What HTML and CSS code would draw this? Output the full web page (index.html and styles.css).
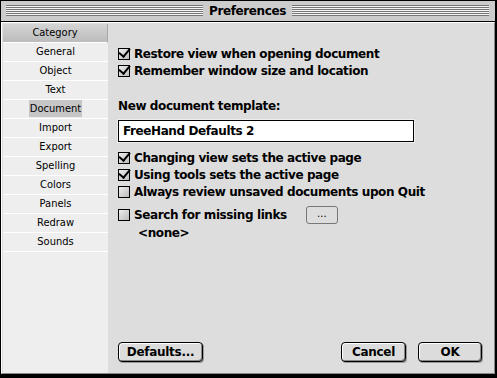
FILE: index.html
```html
<!DOCTYPE html>
<html lang="en">
<head>
  <meta charset="UTF-8" />
  <title>Preferences</title>
  <link rel="stylesheet" href="styles.css">
</head>
<body>
  <div class="window">
    <div class="titlebar">
      <div class="stripes"></div>
      <div class="title">Preferences</div>
      <div class="stripes"></div>
    </div>

    <div class="content">
      <div class="category-list">
        <div class="category-head">Category</div>
        <div class="cat-item">General</div>
        <div class="cat-item">Object</div>
        <div class="cat-item">Text</div>
        <div class="cat-item"><span class="selected">Document</span></div>
        <div class="cat-item">Import</div>
        <div class="cat-item">Export</div>
        <div class="cat-item">Spelling</div>
        <div class="cat-item">Colors</div>
        <div class="cat-item">Panels</div>
        <div class="cat-item">Redraw</div>
        <div class="cat-item">Sounds</div>
      </div>

      <div class="panel">
        <div class="group first">
          <label class="check"><span class="box checked"></span>Restore view when opening document</label>
          <label class="check"><span class="box checked"></span>Remember window size and location</label>
        </div>

        <div class="field-label">New document template:</div>
        <div class="text-field">FreeHand Defaults 2</div>

        <div class="group">
          <label class="check"><span class="box checked"></span>Changing view sets the active page</label>
          <label class="check"><span class="box checked"></span>Using tools sets the active page</label>
          <label class="check"><span class="box"></span>Always review unsaved documents upon Quit</label>
          <div class="links-row">
            <label class="check"><span class="box"></span>Search for missing links</label>
            <span class="small-btn">...</span>
          </div>
          <div class="none-label">&lt;none&gt;</div>
        </div>

        <div class="buttons">
          <button class="btn defaults">Defaults...</button>
          <div class="spacer"></div>
          <button class="btn cancel">Cancel</button>
          <button class="btn ok">OK</button>
        </div>
      </div>
    </div>
  </div>
</body>
</html>
```

FILE: styles.css
```css
* {
  box-sizing: border-box;
}

body {
  margin: 0;
  background: #000;
  font-family: 'DejaVu Sans Condensed', 'DejaVu Sans', sans-serif;
  color: #000;
}

.window {
  width: 497px;
  height: 378px;
  background: #000;
  padding: 1px 2px 4px 1px;
  display: flex;
  flex-direction: column;
}

.titlebar {
  height: 21px;
  background: #cccccc;
  display: flex;
  align-items: center;
  padding: 0 6px 1px 5px;
  gap: 4px;
  border-bottom: 1px solid #000;
  flex-shrink: 0;
}

.stripes {
  flex: 1;
  height: 11px;
  background: repeating-linear-gradient(to bottom, #777 0, #777 1px, #f4f4f4 1px, #f4f4f4 2px);
}

.title {
  font-family: 'DejaVu Sans', sans-serif;
  font-weight: bold;
  font-size: 12px;
  padding: 0 2px;
  letter-spacing: -0.4px;
}

.content {
  flex: 1;
  display: flex;
  background: #dddddd;
  border-top: 1px solid #fff;
  border-left: 1px solid #fff;
  border-right: 1px solid #888;
  border-bottom: 1px solid #888;
}

.category-list {
  width: 105px;
  background: #eeeeee;
  margin: 1px 0 0 1px;
  font-size: 11px;
}

.category-head {
  height: 19px;
  line-height: 18px;
  text-align: center;
  background: linear-gradient(#d4d4d4, #bcbcbc);
  border-bottom: 1px solid #fff;
  border-right: 1px solid #aaa;
}

.cat-item {
  height: 19px;
  line-height: 18px;
  text-align: center;
  border-bottom: 1px solid #fff;
}

.selected {
  background: #c6c6c6;
  padding: 2px 1px;
}

.panel {
  flex: 1;
  display: flex;
  flex-direction: column;
  padding: 22px 12px 11px 10px;
  font-family: 'DejaVu Sans', sans-serif;
  font-weight: bold;
  font-size: 12px;
  letter-spacing: -0.4px;
}

.group {
  display: flex;
  flex-direction: column;
}

.check {
  display: flex;
  align-items: center;
  height: 17px;
  gap: 4px;
}

.box {
  width: 12px;
  height: 12px;
  border: 1px solid #000;
  background: linear-gradient(135deg, #eee, #bbb);
  position: relative;
  flex-shrink: 0;
}

.box.checked::after {
  content: "";
  position: absolute;
  left: 2px;
  top: -3px;
  width: 5px;
  height: 9px;
  border-right: 2px solid #000;
  border-bottom: 2px solid #000;
  transform: rotate(40deg);
}

.field-label {
  margin-top: 19px;
  height: 17px;
  line-height: 17px;
}

.text-field {
  margin-top: 5px;
  width: 296px;
  height: 22px;
  background: #fff;
  border: 1px solid #000;
  box-shadow: 0 0 0 1px #eee;
  padding: 0 4px;
  line-height: 20px;
  margin-bottom: 7px;
}

.links-row {
  display: flex;
  align-items: center;
  margin-top: 6px;
  gap: 19px;
}

.small-btn {
  width: 32px;
  height: 18px;
  border: 1px solid #777;
  border-radius: 3px;
  background: #ddd;
  text-align: center;
  font-weight: normal;
  font-size: 10px;
  line-height: 14px;
  letter-spacing: 0;
}

.none-label {
  margin: 2px 0 0 20px;
  height: 16px;
}

.buttons {
  margin-top: auto;
  display: flex;
  align-items: center;
  gap: 12px;
}

.spacer {
  flex: 1;
}

.btn {
  height: 20px;
  font-family: 'DejaVu Sans', sans-serif;
  font-weight: bold;
  font-size: 12px;
  letter-spacing: -0.3px;
  border: 1px solid #000;
  border-radius: 4px;
  background: #dcdcdc;
  box-shadow: inset 1px 1px 0 #fff, inset -1px -1px 0 #888, 1px 1px 0 #999;
  padding: 0;
}

.defaults {
  width: 85px;
}

.cancel {
  width: 65px;
}

.ok {
  width: 64px;
}
```
